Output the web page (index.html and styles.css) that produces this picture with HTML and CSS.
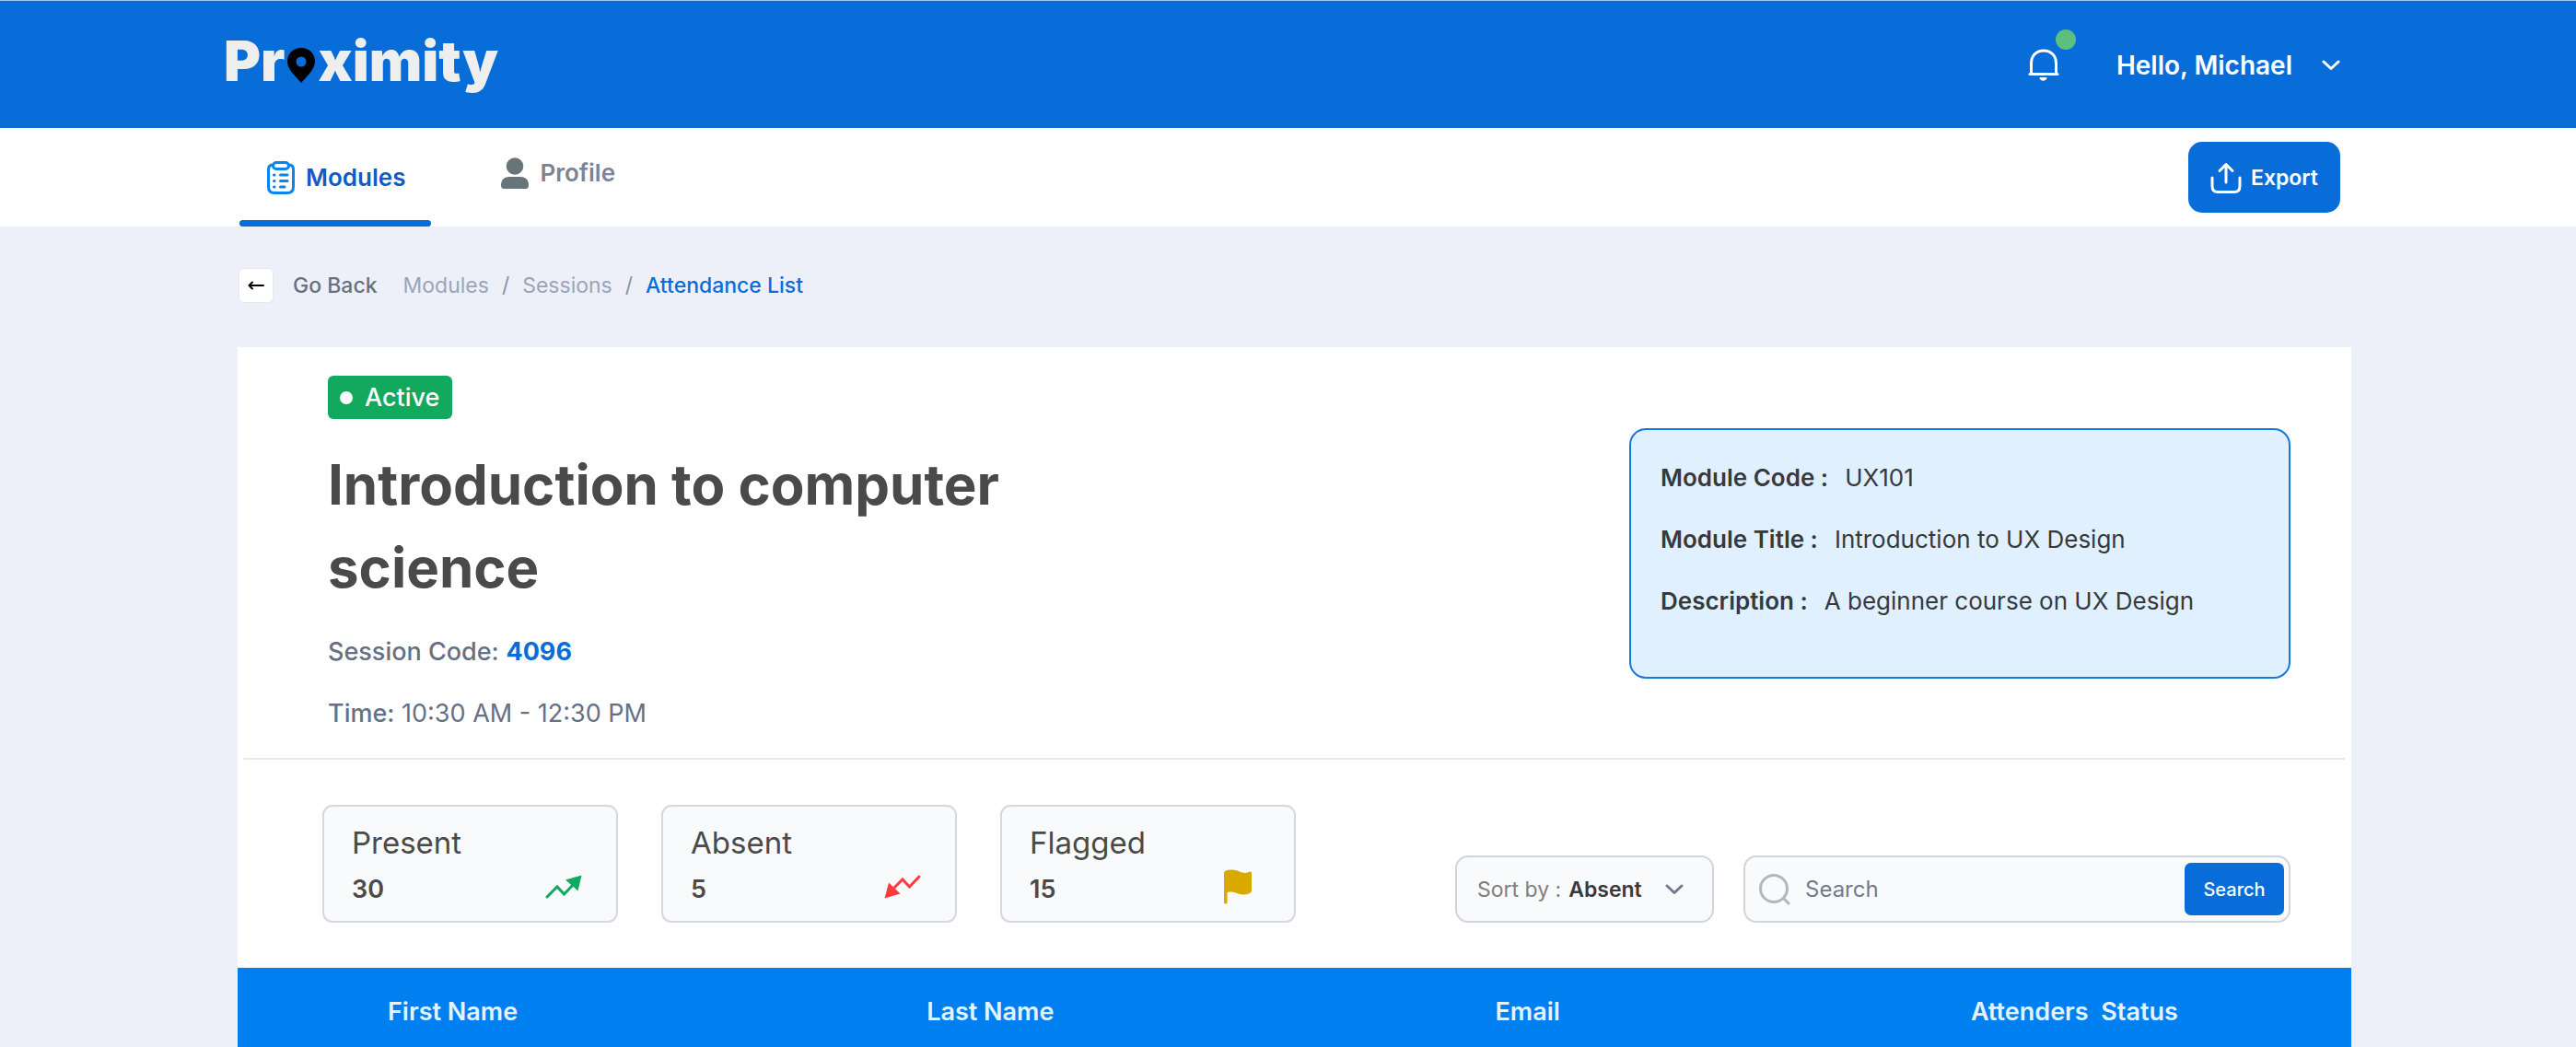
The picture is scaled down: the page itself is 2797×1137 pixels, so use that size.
FILE: index.html
```html
<!DOCTYPE html>
<html lang="en">
<head>
  <meta charset="utf-8">
  <meta name="viewport" content="width=device-width, initial-scale=1">
  <title>Proximity - Attendance List</title>
  <link rel="stylesheet" href="styles.css">
</head>
<body>
  <header class="topbar">
    <a class="logo" href="#" aria-label="Proximity"><span>Pr</span><svg class="logo-pin" viewBox="0 0 32 38" aria-hidden="true"><path fill-rule="evenodd" d="M16 0C7 0 1 6.500 1 14.500C1 20 4 24 7 28L16 38L25 28C28 24 31 20 31 14.500C31 6.500 25 0 16 0ZM16 9.500A5.500 5.500 0 1 1 16 20.500A5.500 5.500 0 1 1 16 9.500Z"/></svg><span>ximity</span></a>
    <div class="account">
      <button class="bell" type="button" aria-label="Notifications">
        <svg viewBox="0 0 34 36" width="34" height="36" aria-hidden="true"><path d="M3.500 27V16C3.500 7.500 9 2 17 2S30.500 7.500 30.500 16V27" fill="none" stroke="#fff" stroke-width="3"/><path d="M2 27.500H32" stroke="#fff" stroke-width="3" stroke-linecap="round"/><path d="M12.500 31H20.500C20.500 36 12.500 36 12.500 31Z" fill="#fff"/></svg>
        <span class="bell-dot"></span>
      </button>
      <button class="user" type="button">Hello, Michael
        <svg viewBox="0 0 20 12" width="20" height="12" aria-hidden="true"><path d="M2 2L10 9.500L18 2" fill="none" stroke="#fff" stroke-width="3" stroke-linecap="round" stroke-linejoin="round"/></svg>
      </button>
    </div>
  </header>

  <div class="tabbar">
    <nav class="tabs" aria-label="Main">
      <a class="tab tab-active" href="#" aria-current="page">
        <svg viewBox="0 0 32 38" width="32" height="38" fill="none" stroke="#0a84f0" stroke-width="3" stroke-linecap="round" aria-hidden="true"><path d="M7 5C4 5 2.500 7 2.500 10V29C2.500 33.500 4.500 35.500 9 35.500H23C27.500 35.500 29.500 33.500 29.500 29V10C29.500 7 28 5 25 5"/><rect x="7.500" y="2.500" width="17" height="7" rx="3.500"/><path d="M8.500 16H9M8.500 22.500H9M8.500 29H9M15.500 16H23M15.500 22.500H23M15.500 29H20"/></svg>
        Modules
      </a>
      <a class="tab" href="#">
        <svg viewBox="0 0 32 34" width="32" height="34" fill="#677479" aria-hidden="true"><circle cx="16" cy="9.500" r="9.300"/><path d="M1 30C1 24 5 21 10 21H22C27 21 31 24 31 30C31 32.500 30 34 28 34H4C2 34 1 32.500 1 30Z"/></svg>
        Profile
      </a>
    </nav>
    <button class="export" type="button">
      <svg viewBox="0 0 34 34" width="34" height="34" fill="none" stroke="#fff" stroke-width="3" stroke-linecap="round" stroke-linejoin="round" aria-hidden="true"><path d="M2 17V26C2 30.500 4 32.500 8 32.500H26C30 32.500 32 30.500 32 26V17M17 22V2.500M10 9.500L17 2.500L24 9.500"/></svg>
      Export
    </button>
  </div>

  <nav class="crumbs" aria-label="Breadcrumb">
    <a class="back" href="#"><span class="back-icon"><svg viewBox="0 0 20 12" width="20" height="12" fill="none" stroke="#000" stroke-width="2" stroke-linecap="round" stroke-linejoin="round" aria-hidden="true"><path d="M18 6H2.500M6 2.500L2.500 6L6 9.500"/></svg></span>Go Back</a>
    <ol class="trail">
      <li><a href="#">Modules</a></li>
      <li><a href="#">Sessions</a></li>
      <li><a class="here" href="#" aria-current="page">Attendance List</a></li>
    </ol>
  </nav>

  <main class="sheet">
    <section class="intro">
      <div class="session">
        <span class="badge">Active</span>
        <h1>Introduction to computer science</h1>
        <p><b>Session Code:</b> <strong>4096</strong></p>
        <p><b>Time:</b> 10:30 AM - 12:30 PM</p>
      </div>
      <dl class="module">
        <div><dt>Module Code :</dt><dd>UX101</dd></div>
        <div><dt>Module Title :</dt><dd>Introduction to UX Design</dd></div>
        <div><dt>Description :</dt><dd>A beginner course on UX Design</dd></div>
      </dl>
    </section>

    <section class="summary">
      <div class="stats">
        <div class="stat">
          <h2>Present</h2>
          <div class="stat-row"><span>30</span>
            <svg viewBox="0 0 40 26" width="40" height="26" aria-hidden="true"><path d="M2 24L13 13L20.500 21L32 9" fill="none" stroke="#12a85e" stroke-width="3" stroke-linecap="round"/><path d="M39.500 0.500L22 5.500L35.500 17.500Z" fill="#12a85e"/></svg>
          </div>
        </div>
        <div class="stat">
          <h2>Absent</h2>
          <div class="stat-row"><span>5</span>
            <svg viewBox="0 0 40 26" width="40" height="26" aria-hidden="true"><path d="M38 2L27.500 13L20 5L9 16" fill="none" stroke="#ff3b3b" stroke-width="3" stroke-linecap="round"/><path d="M0.500 25.500L5 8.500L17.500 20.500Z" fill="#ff3b3b"/></svg>
          </div>
        </div>
        <div class="stat">
          <h2>Flagged</h2>
          <div class="stat-row"><span>15</span>
            <svg viewBox="0 0 40 38" width="40" height="38" aria-hidden="true"><path d="M1 4C1 1 6 .5 9.500 .5C16 .5 19 4 24 4C27 4 28 2.500 29.500 2.500C31 2.500 31 3.500 31 4.500V23C31 26 26 27.500 22.500 27.500C16 27.500 14 24.500 9 24.500C6 24.500 4.500 25 4.500 25.500V36C4.500 38 1 38 1 36Z" fill="#d9a900"/></svg>
          </div>
        </div>
      </div>
      <form class="filters">
        <div class="sort">
          <label for="sort">Sort by :</label>
          <select id="sort"><option>Absent</option><option>Present</option><option>Flagged</option></select>
          <svg class="sort-arrow" viewBox="0 0 20 12" width="20" height="12" aria-hidden="true"><path d="M2 2L10 9.500L18 2" fill="none" stroke="#707b90" stroke-width="3" stroke-linecap="round" stroke-linejoin="round"/></svg>
        </div>
        <div class="search">
          <svg viewBox="0 0 34 34" width="34" height="34" fill="none" stroke="#b5b5c0" stroke-width="3" stroke-linecap="round" aria-hidden="true"><circle cx="16" cy="16" r="14.500"/><path d="M27 27L32 32"/></svg>
          <input type="search" placeholder="Search" aria-label="Search attendees">
          <button type="submit">Search</button>
        </div>
      </form>
    </section>

    <table class="attendance">
      <thead>
        <tr><th scope="col">First Name</th><th scope="col">Last Name</th><th scope="col">Email</th><th scope="col">Attenders&nbsp; Status</th></tr>
      </thead>
    </table>
  </main>
</body>
</html>
```

FILE: styles.css
```css
* { box-sizing: border-box; }

body {
  margin: 0;
  background: #edf0f9;
  color: #4a4a4a;
  font: 400 26px/40px Inter, "Liberation Sans", sans-serif;
}

button, input, select { font: inherit; color: inherit; border: 0; background: none; padding: 0; }
button { cursor: pointer; }
a { color: inherit; text-decoration: none; }
svg { flex: none; }

/* Top bar */
.topbar {
  display: flex;
  justify-content: space-between;
  align-items: center;
  height: 139px;
  padding: 0 256px 0 243px;
  border-top: 1px solid #a5c8f1;
  background: #096dd9;
  color: #fff;
}
.logo {
  display: flex;
  align-items: center;
  margin-bottom: 8px;
  color: #eee;
  font-size: 61px;
  font-weight: 900;
  line-height: 72px;
}
.logo-pin { width: 32px; height: 38px; margin: 10px 2px 0; fill: #000; }
.account { display: flex; align-items: center; gap: 62px; padding-top: 2px; }
.bell { position: relative; width: 34px; height: 36px; }
.bell svg { display: block; }
.bell-dot {
  position: absolute;
  top: -21px;
  right: -18px;
  width: 22px;
  height: 22px;
  border-radius: 50%;
  background: #5bbf7d;
}
.user { display: flex; align-items: center; gap: 32px; font-size: 28px; font-weight: 600; }

/* Tabs */
.tabbar {
  display: flex;
  justify-content: space-between;
  align-items: center;
  padding: 0 256px 0 260px;
  background: #fff;
}
.tabs { display: flex; gap: 46px; }
.tab {
  display: flex;
  align-items: center;
  gap: 11px;
  height: 107px;
  padding: 0 28px 10px 29px;
  color: #7b8496;
  font-weight: 600;
}
.tab-active { position: relative; padding-bottom: 0; color: #0f5bc8; }
.tab-active::after {
  content: "";
  position: absolute;
  inset: auto 0 0;
  height: 7px;
  border-radius: 4px;
  background: #096dd9;
}
.export {
  display: flex;
  align-items: center;
  gap: 10px;
  height: 77px;
  padding: 0 24px;
  border-radius: 15px;
  background: #096dd9;
  color: #fff;
  font-size: 23px;
  font-weight: 600;
}

/* Breadcrumb */
.crumbs {
  display: flex;
  align-items: center;
  gap: 28px;
  padding: 45px 244px 48px 259px;
  color: #9aa5b8;
  font-size: 23px;
  line-height: 38px;
}
.back { display: flex; align-items: center; gap: 21px; color: #667085; font-weight: 500; }
.back-icon {
  display: grid;
  place-items: center;
  width: 38px;
  height: 38px;
  border: 1px solid #e6e8ec;
  border-radius: 6px;
  background: #fff;
}
.trail { display: flex; margin: 0; padding: 0; list-style: none; }
.trail li + li::before { content: "/"; margin: 0 14px; color: #8a93a5; }
.trail .here { color: #096dd9; font-weight: 500; }

/* Session sheet */
.sheet { margin: 0 244px 0 258px; background: #fff; }
.intro {
  display: flex;
  justify-content: space-between;
  align-items: flex-start;
  margin: 0 7px;
  padding: 31px 59px 28px 91px;
  border-bottom: 2px solid #e8e8e8;
}
.session { max-width: 760px; color: #667085; font-size: 27px; }
.badge {
  display: inline-flex;
  align-items: center;
  gap: 13px;
  height: 47px;
  padding: 0 14px 0 13px;
  border-radius: 6px;
  background: #12a85e;
  color: #fff;
  font-weight: 500;
  vertical-align: top;
}
.badge::before { content: ""; width: 14px; height: 14px; border-radius: 50%; background: #fff; }
.session h1 { margin: 26px 0 27px; color: #4a4a4a; font-size: 60px; font-weight: 700; line-height: 90px; }
.session p { margin: 27px 0 0; }
.session b { font-weight: 500; }
.session strong { color: #096dd9; font-weight: 700; }
.module {
  display: flex;
  flex-direction: column;
  gap: 27px;
  width: 718px;
  min-height: 272px;
  margin: 57px 0 0;
  padding: 32px;
  border: 2px solid #1677e0;
  border-radius: 18px;
  background: #e0f0fe;
  color: #36393d;
}
.module div { display: flex; gap: 18px; }
.module dt { font-weight: 600; }
.module dd { margin: 0; }

/* Counters and filters */
.summary {
  display: flex;
  justify-content: space-between;
  align-items: flex-end;
  padding: 49px 66px 49px 92px;
}
.stats { display: flex; gap: 47px; }
.stat {
  width: 321px;
  height: 128px;
  padding: 17px 37px 0 30px;
  border: 2px solid #d5d8df;
  border-radius: 11px;
  background: #f9fafc;
}
.stat h2 { margin: 0 0 6px; font-size: 33px; font-weight: 400; line-height: 44px; }
.stat-row { display: flex; justify-content: space-between; align-items: center; height: 40px; font-size: 27px; font-weight: 600; }
.stat-row span { padding-top: 6px; }
.filters { display: flex; gap: 32px; font-size: 24px; }
.sort, .search {
  display: flex;
  align-items: center;
  height: 73px;
  border: 2px solid #d0d5dd;
  border-radius: 14px;
  background: #f9fafc;
}
.sort { position: relative; width: 281px; padding-left: 22px; font-size: 23px; }
.sort label { margin-right: 8px; color: #808080; }
.sort select { flex: 1; height: 60px; appearance: none; color: #38393d; font-weight: 600; }
.sort-arrow { position: absolute; right: 31px; pointer-events: none; }
.search { width: 594px; padding: 0 5px 0 15px; gap: 16px; color: #707b90; }
.search input { flex: 1; min-width: 0; height: 60px; outline: 0; appearance: none; }
.search input::placeholder { color: #707b90; opacity: 1; }
.search button {
  width: 108px;
  height: 57px;
  border-radius: 7px;
  background: #096dd9;
  color: #fff;
  font-size: 20px;
  font-weight: 500;
}

/* Attendance table */
.attendance { width: 100%; border-collapse: collapse; table-layout: fixed; background: #0080f0; color: #e6f3ff; font-size: 27px; }
.attendance th { width: 22.5%; padding: 28px 0 18px; font-weight: 600; text-align: left; }
.attendance th:first-child { width: 32.6%; padding-left: 163px; }
.attendance th:nth-child(2) { width: 26.9%; }
.attendance th:last-child { width: 18%; }
```
